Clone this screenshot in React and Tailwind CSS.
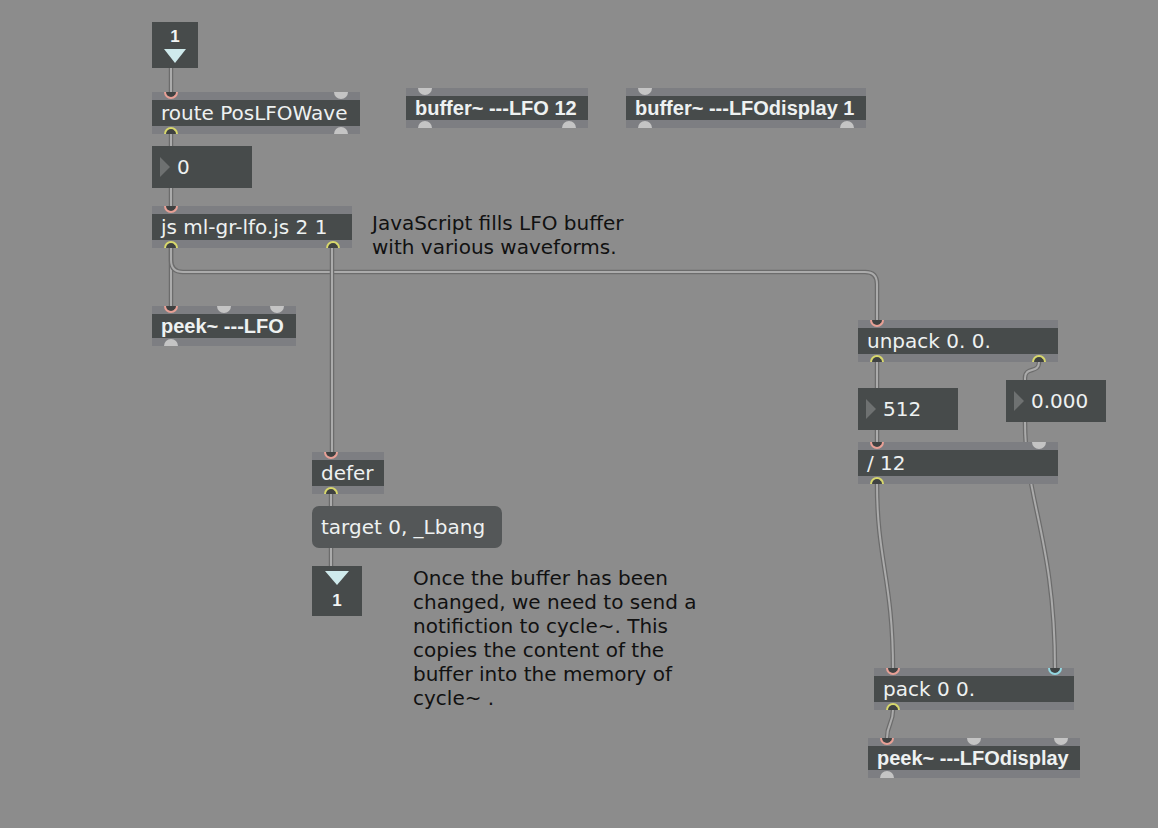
import React from 'react';

const portClass = {
  hot: 'absolute top-0 w-[14px] h-[7px] rounded-b-full border-2 border-t-0 border-[#e8a096] bg-[#3f4242]',
  sig: 'absolute top-0 w-[14px] h-[7px] rounded-b-full border-2 border-t-0 border-[#93d6e0] bg-[#3f4242]',
  cold: 'absolute top-0 w-[14px] h-[7px] rounded-b-full bg-[#c4c4c4]',
  out: 'absolute bottom-0 w-[14px] h-[7px] rounded-t-full border-2 border-b-0 border-[#d8d86c] bg-[#3f4242]',
  outGray: 'absolute bottom-0 w-[14px] h-[7px] rounded-t-full bg-[#c4c4c4]',
};

const Port = ({ kind, at }) => <div className={`${portClass[kind]} ${at}`} />;

// object box: light bands top and bottom, dark body in between
const Obj = ({ pos, bold, ports, children }) => (
  <div className={`absolute flex flex-col ${pos}`}>
    <div className="h-2 bg-[#7d7e82]" />
    {bold ? (
      <div className="flex h-6 items-center bg-[#474b4b] pl-[9px] font-['Liberation_Sans',Arial,sans-serif] text-[20px] font-bold text-[#eef1f1] whitespace-nowrap">
        {children}
      </div>
    ) : (
      <div className="flex h-[26px] items-center bg-[#474b4b] pl-[9px] font-['DejaVu_Sans',sans-serif] text-[20px] text-[#eef1f1] whitespace-nowrap">
        {children}
      </div>
    )}
    <div className="h-2 bg-[#7d7e82]" />
    {ports}
  </div>
);

const NumBox = ({ pos, value }) => (
  <div className={`absolute flex items-center bg-[#474b4b] font-['DejaVu_Sans',sans-serif] text-[20px] text-[#eef1f1] ${pos}`}>
    <div className="ml-2 h-0 w-0 border-y-[10px] border-l-[10px] border-y-transparent border-l-[#6e7171]" />
    <span className="ml-[7px]">{value}</span>
  </div>
);

const Cord = ({ d }) => (
  <g fill="none" strokeLinecap="round">
    <path d={d} stroke="#6c6c6c" strokeWidth="4.5" />
    <path d={d} stroke="#ababab" strokeWidth="2" />
  </g>
);

const cords = [
  'M171,68 L171,92',
  'M171,134 L171,146',
  'M171,188 L171,206',
  'M171,248 L171,306',
  'M171,248 L171,260 Q171,272 183,272 L865,272 Q877,272 877,284 L877,320',
  'M332,248 L332,452',
  'M331,494 L331,506',
  'M331,548 L331,566',
  'M877,362 L877,388',
  'M877,430 L877,442',
  'M1039,362 C1039,374 1025,366 1025,378 L1025,380',
  'M1025,422 C1025,500 1055,540 1055,670',
  'M877,484 C877,560 893,580 893,670',
  'M893,710 C893,724 887,724 887,738',
];

export default function App() {
  return (
    <div className="relative h-[828px] w-[1158px] overflow-hidden bg-[#8c8c8c]">
      <svg className="absolute inset-0" width="1158" height="828">
        {cords.map((d, i) => (
          <Cord key={i} d={d} />
        ))}
      </svg>

      {/* inlet 1 */}
      <div className="absolute left-[152px] top-[22px] flex h-[46px] w-[46px] flex-col items-center bg-[#474b4b]">
        <span className="mt-[6px] font-['Liberation_Sans',Arial,sans-serif] text-[17px] font-bold leading-[17px] text-[#f2f4f4]">1</span>
        <div className="mt-[4px] h-0 w-0 border-x-[11px] border-t-[14px] border-x-transparent border-t-[#cfeaec]" />
      </div>

      <Obj
        pos="left-[152px] top-[92px] w-[208px]"
        ports={[
          <Port key="a" kind="hot" at="left-[12px]" />,
          <Port key="b" kind="cold" at="right-[12px]" />,
          <Port key="c" kind="out" at="left-[12px]" />,
          <Port key="d" kind="outGray" at="right-[12px]" />,
        ]}
      >
        route PosLFOWave
      </Obj>

      <Obj
        bold
        pos="left-[406px] top-[88px] w-[182px]"
        ports={[
          <Port key="a" kind="cold" at="left-[12px]" />,
          <Port key="b" kind="outGray" at="left-[12px]" />,
          <Port key="c" kind="outGray" at="right-[12px]" />,
        ]}
      >
        buffer~ ---LFO 12
      </Obj>

      <Obj
        bold
        pos="left-[626px] top-[88px] w-[240px]"
        ports={[
          <Port key="a" kind="cold" at="left-[12px]" />,
          <Port key="b" kind="outGray" at="left-[12px]" />,
          <Port key="c" kind="outGray" at="right-[12px]" />,
        ]}
      >
        buffer~ ---LFOdisplay 1
      </Obj>

      <NumBox pos="left-[152px] top-[146px] h-[42px] w-[100px]" value="0" />

      <Obj
        pos="left-[152px] top-[206px] w-[200px]"
        ports={[
          <Port key="a" kind="hot" at="left-[12px]" />,
          <Port key="b" kind="out" at="left-[12px]" />,
          <Port key="c" kind="out" at="right-[12px]" />,
        ]}
      >
        js ml-gr-lfo.js 2 1
      </Obj>

      <div className="absolute left-[372px] top-[211px] font-['DejaVu_Sans',sans-serif] text-[20px] leading-[24px] text-[#111]">
        JavaScript fills LFO buffer
        <br />
        with various waveforms.
      </div>

      <Obj
        bold
        pos="left-[152px] top-[306px] w-[144px]"
        ports={[
          <Port key="a" kind="hot" at="left-[12px]" />,
          <Port key="b" kind="cold" at="left-[65px]" />,
          <Port key="c" kind="cold" at="right-[12px]" />,
          <Port key="d" kind="outGray" at="left-[12px]" />,
        ]}
      >
        peek~ ---LFO
      </Obj>

      <Obj
        pos="left-[312px] top-[452px] w-[72px]"
        ports={[
          <Port key="a" kind="hot" at="left-[12px]" />,
          <Port key="b" kind="out" at="left-[12px]" />,
        ]}
      >
        defer
      </Obj>

      <div className="absolute left-[312px] top-[506px] flex h-[42px] w-[190px] items-center rounded-[7px] bg-[#545758] pl-[9px] font-['DejaVu_Sans',sans-serif] text-[20px] text-[#eef1f1] whitespace-nowrap">
        target 0, _Lbang
      </div>

      {/* outlet 1 */}
      <div className="absolute left-[312px] top-[566px] flex h-[50px] w-[50px] flex-col items-center bg-[#474b4b]">
        <div className="mt-[5px] h-0 w-0 border-x-[12px] border-t-[14px] border-x-transparent border-t-[#cfeaec]" />
        <span className="mt-[7px] font-['Liberation_Sans',Arial,sans-serif] text-[17px] font-bold leading-[17px] text-[#f2f4f4]">1</span>
      </div>

      <div className="absolute left-[413px] top-[566px] font-['DejaVu_Sans',sans-serif] text-[20px] leading-[24px] text-[#111]">
        Once the buffer has been
        <br />
        changed, we need to send a
        <br />
        notifiction to cycle~. This
        <br />
        copies the content of the
        <br />
        buffer into the memory of
        <br />
        cycle~ .
      </div>

      <Obj
        pos="left-[858px] top-[320px] w-[200px]"
        ports={[
          <Port key="a" kind="hot" at="left-[12px]" />,
          <Port key="b" kind="out" at="left-[12px]" />,
          <Port key="c" kind="out" at="right-[12px]" />,
        ]}
      >
        unpack 0. 0.
      </Obj>

      <NumBox pos="left-[858px] top-[388px] h-[42px] w-[100px]" value="512" />
      <NumBox pos="left-[1006px] top-[380px] h-[42px] w-[100px]" value="0.000" />

      <Obj
        pos="left-[858px] top-[442px] w-[200px]"
        ports={[
          <Port key="a" kind="hot" at="left-[12px]" />,
          <Port key="b" kind="cold" at="right-[12px]" />,
          <Port key="c" kind="out" at="left-[12px]" />,
        ]}
      >
        / 12
      </Obj>

      <Obj
        pos="left-[874px] top-[668px] w-[200px]"
        ports={[
          <Port key="a" kind="hot" at="left-[12px]" />,
          <Port key="b" kind="sig" at="right-[12px]" />,
          <Port key="c" kind="out" at="left-[12px]" />,
        ]}
      >
        pack 0 0.
      </Obj>

      <Obj
        bold
        pos="left-[868px] top-[738px] w-[212px]"
        ports={[
          <Port key="a" kind="hot" at="left-[12px]" />,
          <Port key="b" kind="cold" at="left-[99px]" />,
          <Port key="c" kind="cold" at="right-[12px]" />,
          <Port key="d" kind="outGray" at="left-[12px]" />,
        ]}
      >
        peek~ ---LFOdisplay
      </Obj>
    </div>
  );
}
